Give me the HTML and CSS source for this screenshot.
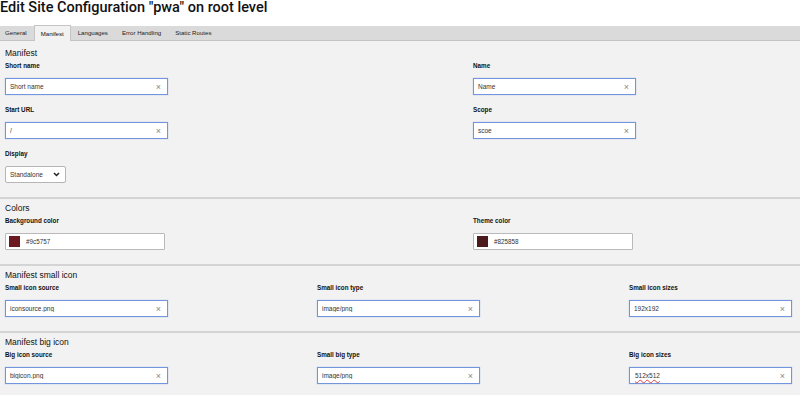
FILE: index.html
```html
<!DOCTYPE html>
<html>
	<head>
		<meta charset="UTF-8">
		<title>Edit Site Configuration</title>
		<link rel="stylesheet" href="styles.css">
	</head>
	<body>
		<h1 class="title">Edit Site Configuration "pwa" on root level</h1>
		<div class="tabs">
			<a class="tab" href="javascript:;">General</a>
			<a class="tab active" href="javascript:;">Manifest</a>
			<a class="tab" href="javascript:;">Languages</a>
			<a class="tab" href="javascript:;">Error Handling</a>
			<a class="tab" href="javascript:;">Static Routes</a>
		</div>
		<div class="panel">
			<!-- manifest -->
			<div class="section first">
				<h2>Manifest</h2>
				<div class="grid2">
					<div class="field">
						<label>Short name</label>
						<div class="input-wrap"><input type="text" value="Short name"><span class="clear">&times;</span></div>
					</div>
					<div class="field">
						<label>Name</label>
						<div class="input-wrap"><input type="text" value="Name"><span class="clear">&times;</span></div>
					</div>
					<div class="field">
						<label>Start URL</label>
						<div class="input-wrap"><input type="text" value="/"><span class="clear">&times;</span></div>
					</div>
					<div class="field">
						<label>Scope</label>
						<div class="input-wrap"><input type="text" value="scoe"><span class="clear">&times;</span></div>
					</div>
					<div class="field">
						<label>Display</label>
						<div class="select">
							<span>Standalone</span>
							<svg width="7" height="5" viewBox="0 0 7 5"><path d="M1 1l2.5 2.5L6 1" fill="none" stroke="#222" stroke-width="1.5"/></svg>
						</div>
					</div>
				</div>
			</div>
			<!-- colors -->
			<div class="section">
				<h2>Colors</h2>
				<div class="grid2">
					<div class="field">
						<label>Background color</label>
						<div class="color-input"><span class="swatch swatch-bg"></span><span>#9c5757</span></div>
					</div>
					<div class="field">
						<label>Theme color</label>
						<div class="color-input"><span class="swatch swatch-theme"></span><span>#825858</span></div>
					</div>
				</div>
			</div>
			<!-- small icon -->
			<div class="section">
				<h2>Manifest small icon</h2>
				<div class="grid3">
					<div class="field">
						<label>Small icon source</label>
						<div class="input-wrap"><input type="text" value="iconsource.png"><span class="clear">&times;</span></div>
					</div>
					<div class="field">
						<label>Small icon type</label>
						<div class="input-wrap"><input type="text" value="image/png"><span class="clear">&times;</span></div>
					</div>
					<div class="field">
						<label>Small icon sizes</label>
						<div class="input-wrap"><input type="text" value="192x192"><span class="clear">&times;</span></div>
					</div>
				</div>
			</div>
			<!-- big icon -->
			<div class="section">
				<h2>Manifest big icon</h2>
				<div class="grid3">
					<div class="field">
						<label>Big icon source</label>
						<div class="input-wrap"><input type="text" value="bigicon.png"><span class="clear">&times;</span></div>
					</div>
					<div class="field">
						<label>Small big type</label>
						<div class="input-wrap"><input type="text" value="image/png"><span class="clear">&times;</span></div>
					</div>
					<div class="field">
						<label>Big icon sizes</label>
						<!-- focused field, shows the spell check mark -->
						<div class="input-wrap"><div class="text-box"><span class="misspelled">512x512</span></div><span class="clear">&times;</span></div>
					</div>
				</div>
			</div>
		</div>
	</body>
</html>
```

FILE: styles.css
```css
*{
	margin: 0;
	padding: 0;
	box-sizing: border-box;
}
body{
	background: #fff;
	font-family: "Liberation Sans", Arial, sans-serif;
	color: #222;
	overflow: hidden;
	height: 395px;
}
.title{
	font-family: Roboto, "Open Sans", sans-serif;
	font-size: 14.5px;
	font-weight: 500;
	line-height: 16px;
	height: 26px;
	color: #111;
	white-space: nowrap;
}
.tabs{
	display: flex;
	width: 936px;
	height: 15px;
	background: #dadada;
	border-bottom: 1px solid #c4c4c4;
}
.tab{
	display: block;
	padding: 0 7px;
	font-size: 6.1px;
	line-height: 14px;
	color: #222;
	text-decoration: none;
}
.tab:first-child{
	padding-left: 5px;
}
.tab.active{
	background: #f2f2f2;
	border: 1px solid #c4c4c4;
	border-bottom: none;
	margin-top: -1px;
	height: 16px;
	line-height: 15px;
	padding: 0 6px;
	color: #111;
}
.panel{
	background: #f2f2f2;
	width: 936px;
	height: 400px;
}
.section{
	padding: 3px 5px 4px;
	border-top: 2px solid #d4d4d4;
}
.section.first{
	border-top: none;
	padding-top: 6px;
}
.section h2{
	font-size: 8.5px;
	font-weight: normal;
	line-height: 12px;
	margin-bottom: 2px;
	color: #111;
}
.grid2{
	display: grid;
	grid-template-columns: 468px 468px;
}
.grid3{
	display: grid;
	grid-template-columns: 312px 312px 312px;
}
.field{
	margin-bottom: 10px;
}
.field label{
	display: block;
	font-size: 6.3px;
	font-weight: bold;
	line-height: 10px;
	height: 10px;
	margin-bottom: 7px;
	color: #111;
}
.input-wrap{
	position: relative;
	width: 163px;
	height: 17px;
}
.input-wrap input,
.text-box{
	display: block;
	width: 163px;
	height: 17px;
	border: 1px solid #7395de;
	box-shadow: 0 0 1px rgba(80,120,220,.5);
	background: #fff;
	padding: 0 4px;
	font-family: "Liberation Sans", Arial, sans-serif;
	font-size: 6.5px;
	color: #333;
	outline: none;
}
.text-box{
	line-height: 15px;
	padding-left: 5px;
}
.misspelled{
	text-decoration: underline wavy #e04040;
	text-decoration-thickness: 1px;
	text-underline-offset: 1px;
}
.clear{
	position: absolute;
	right: 7px;
	top: 0;
	height: 17px;
	display: flex;
	align-items: center;
	font-size: 9px;
	color: #8a8a8a;
}
.select{
	display: flex;
	align-items: center;
	justify-content: space-between;
	width: 61px;
	height: 17px;
	background: #fff;
	border: 1px solid #b5b5b5;
	border-radius: 2px;
	padding: 0 5px 0 4px;
	font-size: 6.5px;
	color: #333;
}
.color-input{
	display: flex;
	align-items: center;
	width: 160px;
	height: 17px;
	background: #fff;
	border: 1px solid #b9b9b9;
	border-radius: 1px;
	padding-left: 3px;
	font-size: 6.3px;
	color: #333;
}
.swatch{
	width: 11px;
	height: 11px;
	margin-right: 6px;
}
.swatch-bg{
	background: #6b1820;
}
.swatch-theme{
	background: #4a1a1d;
}
```
